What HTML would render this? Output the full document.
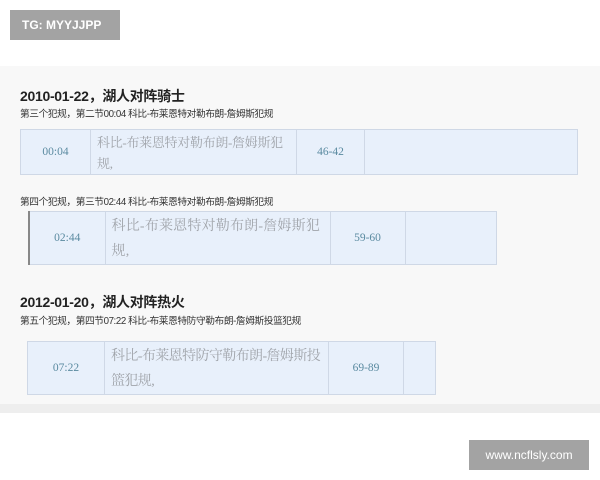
<!DOCTYPE html>
<html><head><meta charset="utf-8"><style>
*{margin:0;padding:0;box-sizing:border-box}
body{width:600px;height:480px;background:#fff;position:relative;overflow:hidden;font-family:"Liberation Sans","Noto Sans CJK SC",sans-serif}
.abs{position:absolute}
.badge{background:#a3a3a3;color:#fff;font-size:12px;line-height:30px;text-align:center}
.panel{left:0;top:66px;width:600px;height:338px;background:#f8f8f8}
.strip{left:0;top:404px;width:600px;height:9px;background:#eeeeee}
.h{font-size:14px;font-weight:bold;color:#222;left:20px;letter-spacing:-0.3px}
.s{font-size:9.7px;color:#333;left:20px;letter-spacing:-0.4px}
table{position:absolute;border-collapse:collapse;background:#e8f0fb;font-family:"Liberation Serif","Noto Serif CJK SC",serif}
td{border:1px solid #cfd8e6;color:#7a8a9a;font-size:11.5px;text-align:center;vertical-align:middle}
td.t{text-align:left;color:#a0a4aa;padding:2px 6px 0;word-break:break-all}
td.n{color:#5a8aa0}
</style></head><body>
<div class="abs badge" style="left:10px;top:10px;width:110px;height:30px;text-align:left;padding-left:12px;font-weight:bold">TG: MYYJJPP</div>
<div class="abs panel"></div>
<div class="abs strip"></div>
<div class="abs h" style="top:86px">2010-01-22，湖人对阵骑士</div>
<div class="abs s" style="top:106px">第三个犯规，第二节00:04 科比-布莱恩特对勒布朗-詹姆斯犯规</div>
<table style="left:20px;top:129px;width:558px;height:46px"><tr>
<td class="n" style="width:70px">00:04</td><td class="t" style="width:206px;font-size:13px;line-height:21px;letter-spacing:-0.3px">科比-布莱恩特对勒布朗-詹姆斯犯规,</td><td class="n" style="width:68px">46-42</td><td></td></tr></table>
<div class="abs s" style="top:194px">第四个犯规，第三节02:44 科比-布莱恩特对勒布朗-詹姆斯犯规</div>
<table style="left:28px;top:211px;width:469px;height:52px;border-left:2px solid #888"><tr>
<td class="n" style="width:76px">02:44</td><td class="t" style="width:225px;font-size:14px;line-height:25px;letter-spacing:0.2px">科比-布莱恩特对勒布朗-詹姆斯犯规,</td><td class="n" style="width:75px">59-60</td><td></td></tr></table>
<div class="abs h" style="top:292px">2012-01-20，湖人对阵热火</div>
<div class="abs s" style="top:313px">第五个犯规，第四节07:22 科比-布莱恩特防守勒布朗-詹姆斯投篮犯规</div>
<table style="left:27px;top:341px;width:409px;height:52px"><tr>
<td class="n" style="width:77px">07:22</td><td class="t" style="width:224px;font-size:14px;line-height:25px;letter-spacing:-0.6px">科比-布莱恩特防守勒布朗-詹姆斯投篮犯规,</td><td class="n" style="width:75px">69-89</td><td></td></tr></table>
<div class="abs badge" style="left:469px;top:440px;width:120px;height:30px">www.ncflsly.com</div>
</body></html>
